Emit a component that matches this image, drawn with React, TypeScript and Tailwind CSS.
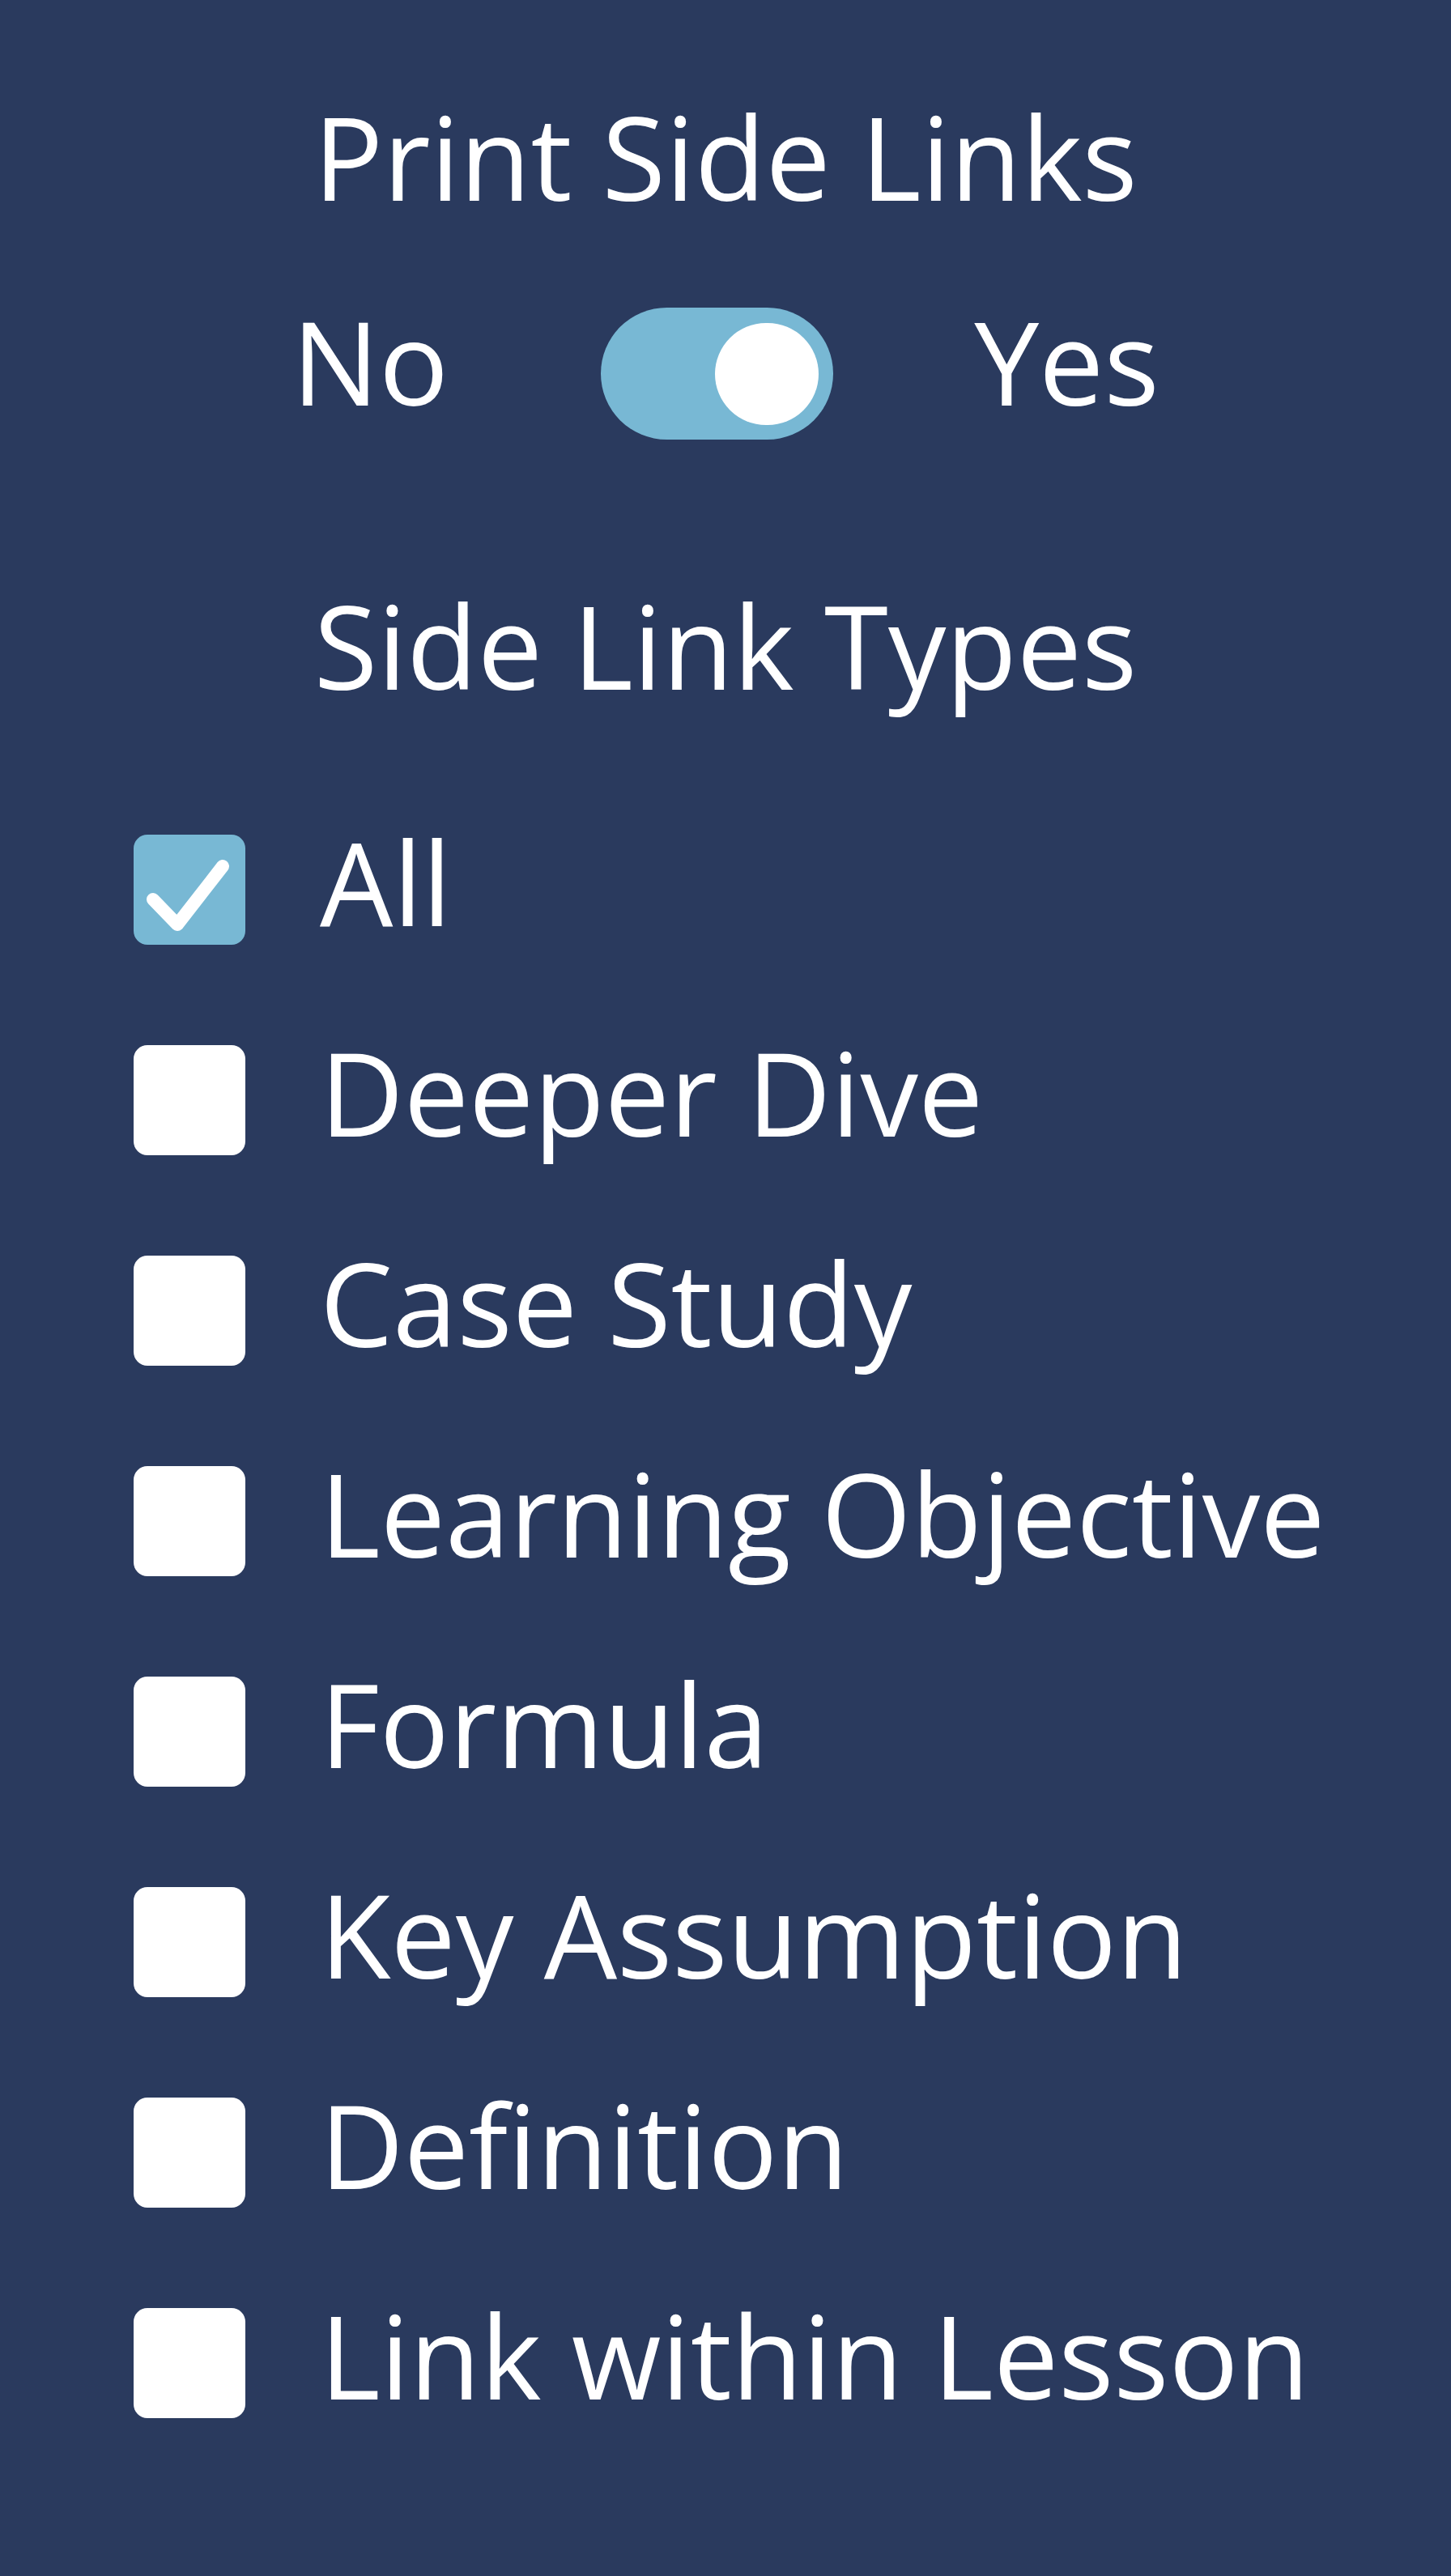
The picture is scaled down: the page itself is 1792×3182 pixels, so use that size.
import React, { useState } from "react";

const LINK_TYPES = [
  "All",
  "Deeper Dive",
  "Case Study",
  "Learning Objective",
  "Formula",
  "Key Assumption",
  "Definition",
  "Link within Lesson",
];

function Toggle({ on, onChange }: { on: boolean; onChange: (v: boolean) => void }) {
  return (
    <button
      type="button"
      onClick={() => onChange(!on)}
      className={`flex h-[163px] w-[287px] items-center rounded-full px-[18px] ${
        on ? "justify-end bg-[#78b8d4]" : "justify-start bg-[#5b6a8c]"
      }`}
    >
      <span className="block h-[126px] w-[128px] rounded-full bg-white" />
    </button>
  );
}

function Checkbox({ checked }: { checked: boolean }) {
  return (
    <span
      className={`flex h-[136px] w-[138px] shrink-0 items-center justify-center rounded-[17px] ${
        checked ? "bg-[#78b8d4]" : "bg-white"
      }`}
    >
      {checked && (
        <svg viewBox="0 0 138 136" className="h-[136px] w-[138px]">
          <path d="M24 80 L54 111 L110 39" fill="none" stroke="#fff" strokeWidth="16" strokeLinecap="round" strokeLinejoin="round" />
        </svg>
      )}
    </span>
  );
}

export default function App() {
  const [print, setPrint] = useState(true);
  const [checked, setChecked] = useState<string[]>(["All"]);

  const toggle = (t: string) =>
    setChecked((c) => (c.includes(t) ? c.filter((x) => x !== t) : [...c, t]));

  return (
    <div className="min-h-screen w-full bg-[#2a3a5e] text-white font-['Open_Sans',sans-serif] text-[143px] leading-[140px]">
      <div className="flex flex-col pt-[123px]">
        {/* Print toggle */}
        <h2 className="text-center font-normal">Print Side Links</h2>
        <div className="mt-[117px] flex items-start justify-center">
          <span className="-mt-[4px]">No</span>
          <div className="ml-[188px] mr-[174px]">
            <Toggle on={print} onChange={setPrint} />
          </div>
          <span className="-mt-[4px]">Yes</span>
        </div>

        {/* Link types */}
        <h2 className="mt-[184px] text-center font-normal">Side Link Types</h2>
        <div className="mt-[164px] flex flex-col gap-[124px] pl-[165px]">
          {LINK_TYPES.map((t) => (
            <label key={t} className="flex h-[136px] cursor-pointer items-center" onClick={() => toggle(t)}>
              <Checkbox checked={checked.includes(t)} />
              <span className="ml-[92px] whitespace-nowrap pb-[20px]">{t}</span>
            </label>
          ))}
        </div>
      </div>
    </div>
  );
}
